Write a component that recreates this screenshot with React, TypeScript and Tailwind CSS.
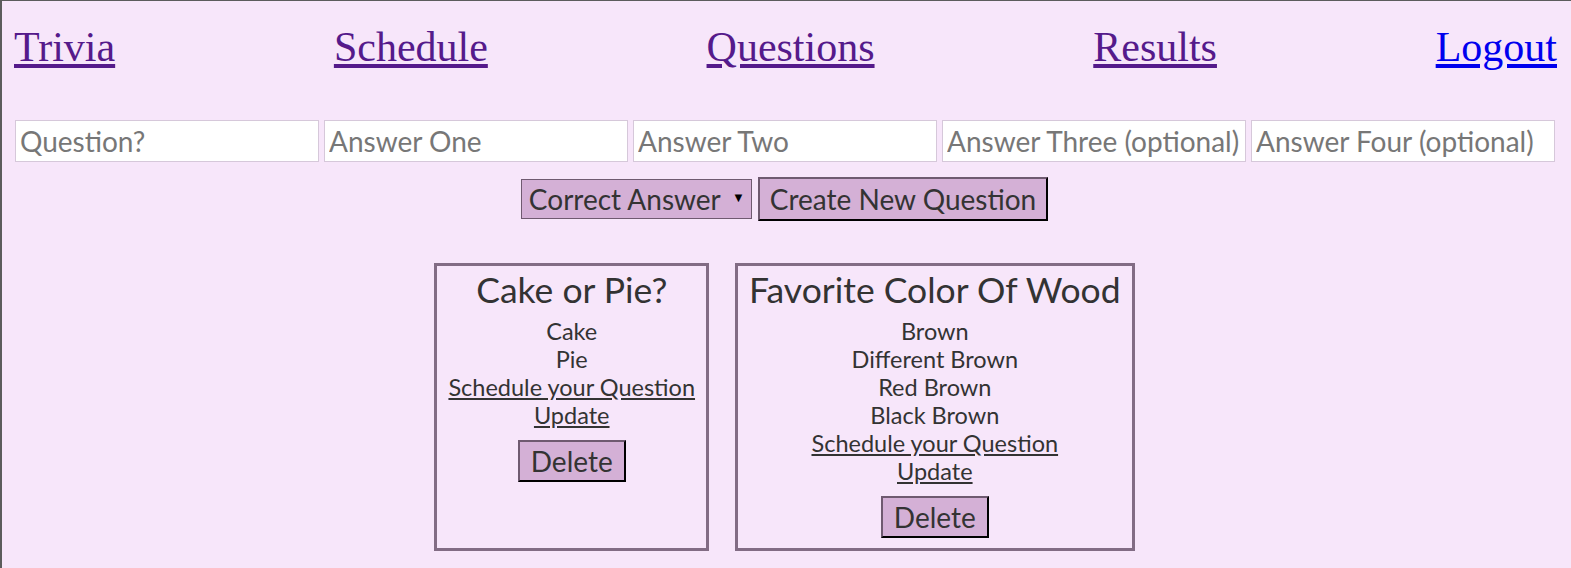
import React from 'react'

type Question = {
  title: string
  answers: string[]
}

const questions: Question[] = [
  { title: 'Cake or Pie?', answers: ['Cake', 'Pie'] },
  { title: 'Favorite Color Of Wood', answers: ['Brown', 'Different Brown', 'Red Brown', 'Black Brown'] },
]

const navLinks = [
  { label: 'Trivia', visited: true },
  { label: 'Schedule', visited: true },
  { label: 'Questions', visited: true },
  { label: 'Results', visited: true },
  { label: 'Logout', visited: false },
]

const placeholders = ['Question?', 'Answer One', 'Answer Two', 'Answer Three (optional)', 'Answer Four (optional)']

function QuestionCard({ title, answers }: Question) {
  return (
    <div className="flex flex-col items-center border-[3px] border-[#826c84] px-[11px] pt-[4px] pb-[10px] text-[#333]">
      <h2 className="text-[35.5px] leading-[40px] mb-[7px]">{title}</h2>
      {answers.map((a) => (
        <p key={a} className="text-[23.5px] leading-[28px]">{a}</p>
      ))}
      <a href="#" className="text-[23.5px] leading-[28px] underline underline-offset-2">Schedule your Question</a>
      <a href="#" className="text-[23.5px] leading-[28px] underline underline-offset-2">Update</a>
      <button className="mt-[11px] bg-[#d4b0d6] border-2 border-t-[#6f5a70] border-l-[#6f5a70] border-r-black border-b-black px-[11px] h-[42px] text-[28px] leading-none text-[#333]">
        Delete
      </button>
    </div>
  )
}

export default function App() {
  return (
    <div className="min-h-[568px] bg-[#f7e6fa] border-l-2 border-t border-[#5c5c5c] font-['Lato',sans-serif]">
      {/* top nav */}
      <nav className="flex justify-between pl-3 pr-[14px] pt-[22px] font-['Liberation_Serif',serif] text-[42px] leading-[48px]">
        {navLinks.map((l) => (
          <a
            key={l.label}
            href="#"
            className={l.visited ? 'text-[#551a8b] underline' : 'text-[#0000ee] underline'}
          >
            {l.label}
          </a>
        ))}
      </nav>

      {/* new question form */}
      <div className="flex gap-[5px] pl-[13px] pr-[16px] mt-[49px]">
        {placeholders.map((p) => (
          <input
            key={p}
            placeholder={p}
            className="flex-1 min-w-0 h-[42px] bg-white border border-[#d6c8da] px-[4px] text-[28px] text-[#333] placeholder:text-[#777]"
          />
        ))}
      </div>

      <div className="flex justify-center items-center gap-[6px] mt-[15px] pr-[4px]">
        <div className="relative flex items-center h-[40px] w-[231px] bg-[#d4b0d6] border border-[#6f5a70] pl-[7px] text-[28px] text-[#333]">
          <span>Correct Answer</span>
          <span className="absolute right-[6px] top-[8px] text-[13px] text-black">▼</span>
        </div>
        <button className="h-[44px] bg-[#d4b0d6] border-2 border-t-[#6f5a70] border-l-[#6f5a70] border-r-black border-b-black px-[10px] text-[28px] leading-none text-[#333]">
          Create New Question
        </button>
      </div>

      {/* question cards */}
      <div className="flex justify-center gap-[26px] mt-[42px] pr-[4px]">
        {questions.map((q) => (
          <QuestionCard key={q.title} {...q} />
        ))}
      </div>
    </div>
  )
}
